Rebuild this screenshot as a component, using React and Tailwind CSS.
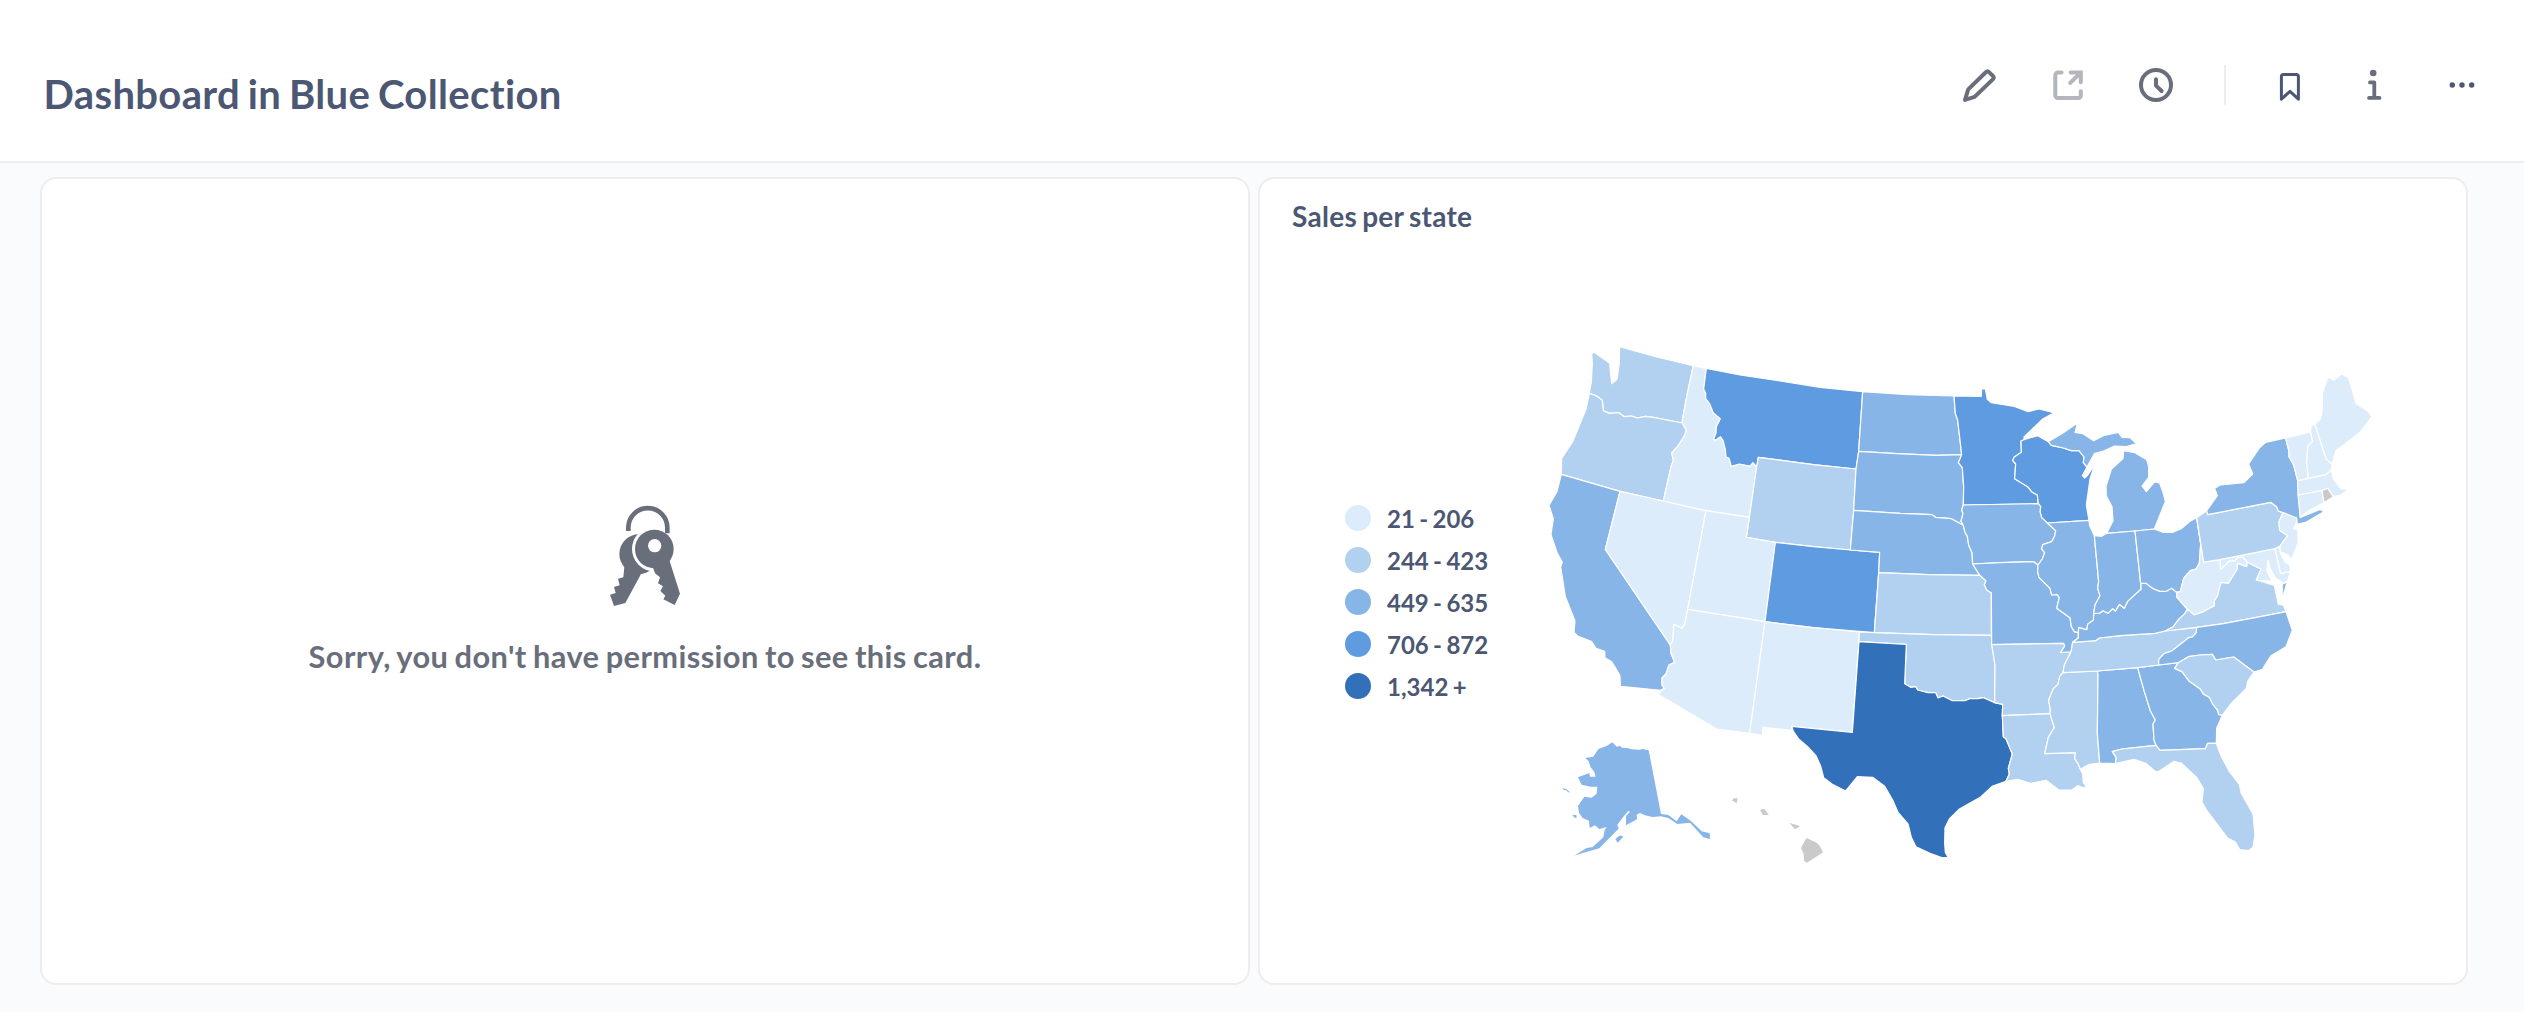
import React from "react";

const LEVELS = ["#DDECFB", "#B2D1F0", "#88B5E8", "#5F9BE0", "#3370BA"];
const NO_DATA = "#CACACA";

const LEGEND = ["21 - 206", "244 - 423", "449 - 635", "706 - 872", "1,342 +"];

const STATES = [
  { id: "WA", level: 1, points: "162,66 209,100 215,161 231,148 238,98 239,50 350,81 460,107 442,190 427,270 427,279 340,262 317,259 292,264 274,258 253,260 236,248 208,250 190,242 187,211 168,197 148,190 154,155 157,100 155,72" },
  { id: "OR", level: 1, points: "148,190 168,197 187,211 190,242 208,250 236,248 253,260 274,258 292,264 317,259 340,262 427,279 439,301 434,316 415,347 395,369 400,391 393,410 370,513 240,484 64,433 65,385 98,335 138,238" },
  { id: "CA", level: 2, points: "64,433 240,484 196,658 391,945 393,970 404,997 387,1005 378,1032 366,1044 366,1065 373,1075 362,1081 241,1069 240,1037 215,995 195,983 194,964 168,955 155,935 113,918 102,907 105,872 76,800 62,710 67,697 52,670 33,614 40,566 27,526 51,484" },
  { id: "NV", level: 0, points: "240,484 370,513 498,542 443,838 434,883 426,895 402,883 398,933 391,945 196,658" },
  { id: "ID", level: 0, points: "460,107 499,115 491,177 497,190 497,206 509,221 520,249 541,266 529,290 528,310 521,326 526,331 541,320 549,331 556,358 558,381 567,384 574,409 598,402 630,408 639,398 650,411 628,562 498,542 370,513 393,410 400,391 395,369 415,347 434,316 439,301 427,279 427,270 442,190" },
  { id: "MT", level: 3, points: "499,115 600,135 720,153 840,172 968,185 956,364 948,417 820,404 655,382 650,411 639,398 630,408 598,402 574,409 567,384 558,381 556,358 549,331 541,320 526,331 521,326 528,310 529,290 541,266 520,249 509,221 497,206 497,190 491,177" },
  { id: "WY", level: 1, points: "655,382 820,404 948,417 941,541 931,660 820,650 706,637 619,622 628,562 650,411" },
  { id: "UT", level: 0, points: "498,542 628,562 619,622 706,637 675,875 443,838" },
  { id: "CO", level: 3, points: "706,637 820,650 931,660 1019,667 1016,728 1003,908 820,893 675,875" },
  { id: "AZ", level: 0, points: "443,838 675,875 629,1210 530,1197 354,1093 373,1075 366,1065 366,1044 378,1032 387,1005 404,997 393,970 391,945 398,933 402,883 426,895 434,883" },
  { id: "NM", level: 0, points: "675,875 820,893 958,906 957,935 937,1207 755,1189 757,1201 669,1192 667,1216 629,1210" },
  { id: "ND", level: 2, points: "968,185 1105,194 1242,198 1246,250 1253,270 1265,374 1188,376 1070,371 956,364" },
  { id: "SD", level: 2, points: "956,364 1070,371 1188,376 1265,374 1255,398 1267,413 1271,470 1270,525 1265,540 1269,550 1263,574 1270,586 1234,566 1187,562 1176,554 1080,550 941,541 948,417" },
  { id: "NE", level: 2, points: "941,541 1080,550 1176,554 1187,562 1234,566 1270,586 1275,607 1282,619 1286,645 1296,668 1298,702 1319,736 1165,734 1016,728 1019,667 931,660" },
  { id: "KS", level: 1, points: "1016,728 1165,734 1319,736 1338,752 1333,764 1341,781 1354,788 1354,916 1180,914 1003,908" },
  { id: "OK", level: 1, points: "958,906 1003,908 1180,914 1354,916 1356,945 1365,1005 1364,1118 1330,1103 1314,1106 1290,1106 1275,1112 1237,1112 1209,1098 1194,1104 1187,1088 1164,1088 1133,1080 1127,1070 1112,1072 1094,1061 1099,943 957,935" },
  { id: "TX", level: 4, points: "957,935 1099,943 1094,1061 1112,1072 1127,1070 1133,1080 1164,1088 1187,1088 1194,1104 1209,1098 1237,1112 1275,1112 1290,1106 1314,1106 1330,1103 1364,1118 1388,1123 1387,1157 1390,1220 1398,1226 1417,1272 1405,1315 1408,1332 1398,1354 1358,1368 1322,1401 1257,1438 1228,1467 1215,1493 1214,1540 1216,1567 1225,1583 1205,1583 1170,1570 1128,1550 1114,1522 1104,1482 1074,1447 1058,1410 1034,1369 998,1342 952,1340 917,1383 877,1363 851,1343 842,1308 828,1277 803,1250 776,1227 760,1203 755,1189 937,1207" },
  { id: "MN", level: 3, points: "1242,198 1324,199 1325,177 1336,177 1342,208 1354,218 1423,229 1465,245 1497,237 1542,248 1507,268 1452,321 1452,330 1443,333 1444,367 1423,381 1418,391 1427,402 1424,446 1463,470 1476,486 1492,495 1495,521 1270,525 1271,470 1267,413 1255,398 1265,374 1253,270 1246,250" },
  { id: "WI", level: 3, points: "1443,333 1454,328 1493,317 1525,335 1534,346 1570,354 1594,362 1617,362 1632,381 1630,398 1641,411 1627,437 1634,444 1642,437 1664,405 1650,447 1639,525 1647,571 1522,579 1505,563 1500,545 1502,530 1495,521 1492,495 1476,486 1463,470 1424,446 1427,402 1418,391 1423,381 1444,367" },
  { id: "MI-upper", level: 2, points: "1525,335 1570,308 1613,278 1605,307 1629,311 1661,332 1693,316 1735,307 1746,322 1770,323 1789,341 1760,350 1724,348 1690,363 1663,371 1641,411 1630,398 1632,381 1617,362 1594,362 1570,354 1534,346" },
  { id: "MI-lower", level: 2, points: "1751,362 1785,368 1820,389 1826,410 1826,442 1806,468 1819,485 1843,456 1859,459 1871,493 1876,515 1843,597 1785,603 1700,610 1719,572 1716,530 1699,498 1698,470 1714,418 1749,386" },
  { id: "IA", level: 2, points: "1270,525 1495,521 1502,530 1500,545 1505,563 1522,579 1547,602 1544,618 1535,635 1508,644 1505,657 1514,668 1507,687 1494,705 1481,695 1380,698 1298,702 1296,668 1286,645 1282,619 1275,607 1270,586 1263,574 1269,550 1265,540" },
  { id: "MO", level: 2, points: "1298,702 1380,698 1481,695 1494,705 1493,725 1497,742 1530,775 1535,795 1551,793 1558,803 1550,835 1590,863 1594,890 1603,905 1615,908 1615,924 1598,937 1593,966 1561,968 1574,948 1570,940 1355,944 1354,788 1341,781 1333,764 1338,752 1319,736" },
  { id: "AR", level: 1, points: "1355,944 1570,940 1574,948 1561,968 1593,966 1573,1005 1569,1028 1559,1039 1554,1063 1540,1076 1526,1110 1531,1140 1530,1151 1480,1153 1387,1157 1388,1123 1364,1118 1365,1005" },
  { id: "LA", level: 1, points: "1387,1157 1480,1153 1530,1151 1543,1193 1525,1222 1514,1271 1606,1268 1604,1286 1615,1302 1621,1318 1628,1332 1630,1358 1639,1368 1633,1374 1613,1367 1596,1380 1557,1380 1518,1351 1472,1360 1433,1348 1398,1354 1408,1332 1405,1315 1417,1272 1398,1226 1390,1220" },
  { id: "MS", level: 1, points: "1569,1028 1672,1023 1674,1033 1672,1210 1679,1299 1645,1304 1621,1318 1615,1302 1604,1286 1606,1268 1514,1271 1525,1222 1543,1193 1530,1151 1531,1140 1526,1110 1540,1076 1554,1063 1559,1039" },
  { id: "AL", level: 2, points: "1672,1023 1793,1013 1813,1085 1831,1142 1846,1170 1839,1182 1842,1230 1848,1246 1745,1257 1717,1265 1729,1283 1726,1301 1679,1299 1672,1210 1674,1033" },
  { id: "GA", level: 2, points: "1793,1013 1856,1005 1915,998 1904,1015 1926,1025 1948,1054 1982,1078 1990,1092 2008,1102 2018,1122 2033,1141 2036,1153 2047,1156 2030,1195 2029,1240 2003,1240 1996,1256 1860,1261 1848,1246 1842,1230 1839,1182 1846,1170 1831,1142 1813,1085" },
  { id: "FL", level: 1, points: "1848,1246 1860,1261 1996,1256 2003,1240 2029,1240 2043,1278 2069,1326 2098,1363 2104,1390 2139,1452 2145,1515 2139,1552 2126,1562 2099,1559 2086,1536 2063,1524 2000,1441 1986,1417 1990,1376 1970,1342 1925,1300 1902,1294 1855,1325 1847,1325 1817,1300 1782,1288 1726,1301 1729,1283 1717,1265 1745,1257" },
  { id: "TN", level: 1, points: "1598,937 1667,932 1678,924 1740,917 1845,910 1875,903 1970,892 1969,908 1957,921 1946,923 1895,963 1872,971 1856,989 1856,1005 1793,1013 1672,1023 1569,1028 1573,1005 1593,966" },
  { id: "KY", level: 2, points: "1615,908 1616,892 1640,899 1643,882 1660,870 1661,851 1680,849 1689,842 1704,850 1718,836 1726,843 1738,823 1753,835 1762,815 1803,777 1802,760 1818,760 1840,776 1860,784 1880,783 1895,775 1910,787 1911,802 1942,838 1935,850 1916,868 1900,890 1875,903 1845,910 1740,917 1678,924 1667,932 1598,937 1615,924" },
  { id: "IL", level: 2, points: "1522,579 1647,571 1649,587 1663,617 1676,755 1673,775 1680,797 1665,825 1661,851 1660,870 1643,882 1640,899 1616,892 1615,908 1603,905 1594,890 1590,863 1550,835 1558,803 1551,793 1535,795 1530,775 1497,742 1493,725 1494,705 1507,687 1514,668 1505,657 1508,644 1535,635 1544,618 1547,602" },
  { id: "IN", level: 2, points: "1663,617 1685,619 1700,610 1785,603 1802,760 1803,777 1762,815 1753,835 1738,823 1726,843 1718,836 1704,850 1689,842 1680,849 1661,851 1665,825 1680,797 1673,775 1676,755" },
  { id: "OH", level: 2, points: "1785,603 1843,597 1870,607 1897,607 1925,595 1950,574 1970,563 1982,642 1978,700 1968,717 1951,722 1931,745 1921,785 1910,787 1895,775 1880,783 1860,784 1840,776 1818,760 1802,760" },
  { id: "WV", level: 0, points: "1970,563 1991,696 2040,689 2042,718 2068,693 2085,692 2093,682 2110,682 2122,697 2120,710 2092,700 2092,717 2065,760 2043,757 2033,797 2023,813 2023,827 1990,845 1963,855 1942,838 1911,802 1910,787 1921,785 1931,745 1951,722 1968,717 1978,700 1982,642" },
  { id: "VA", level: 1, points: "1875,903 1970,892 2050,881 2150,862 2238,845 2230,825 2215,823 2203,766 2149,750 2163,717 2122,697 2120,710 2092,700 2092,717 2065,760 2043,757 2033,797 2023,813 2023,827 1990,845 1963,855 1942,838 1935,850 1916,868 1900,890" },
  { id: "MD", level: 0, points: "2040,689 2205,656 2222,730 2252,724 2243,752 2231,760 2205,743 2190,715 2184,690 2181,722 2196,754 2149,750 2163,717 2122,697 2110,682 2093,682 2085,692 2068,693 2042,718" },
  { id: "VA-shore", level: 2, points: "2227,763 2242,755 2226,808" },
  { id: "NC", level: 2, points: "1970,892 2050,881 2150,862 2238,845 2257,901 2238,950 2193,977 2167,1018 2142,1026 2081,981 2027,990 2017,973 1980,975 1945,980 1915,998 1856,1005 1856,989 1872,971 1895,963 1946,923 1957,921 1969,908" },
  { id: "SC", level: 1, points: "1915,998 1945,980 1980,975 2017,973 2027,990 2081,981 2142,1026 2123,1054 2119,1075 2072,1122 2047,1156 2036,1153 2033,1141 2018,1122 2008,1102 1990,1092 1982,1078 1948,1054 1926,1025 1904,1015" },
  { id: "PA", level: 1, points: "1970,563 2000,542 2003,554 2192,517 2210,530 2215,543 2229,548 2217,575 2219,601 2243,617 2220,648 2205,656 2040,689 1991,696" },
  { id: "NY", level: 2, points: "2000,542 2032,497 2024,475 2041,465 2112,458 2138,432 2126,402 2157,355 2177,337 2237,324 2247,365 2247,380 2261,405 2273,452 2281,562 2340,538 2352,545 2299,576 2272,583 2270,565 2229,548 2215,543 2210,530 2192,517 2003,554" },
  { id: "NJ", level: 0, points: "2229,548 2270,564 2269,580 2260,597 2274,598 2274,640 2254,690 2245,676 2220,665 2220,648 2243,617 2219,601 2217,575" },
  { id: "DE", level: 0, points: "2205,656 2218,650 2221,668 2234,695 2250,706 2252,724 2222,730" },
  { id: "CT", level: 0, points: "2274,495 2346,481 2352,518 2310,539 2281,562" },
  { id: "MA", level: 0, points: "2273,452 2305,445 2357,434 2374,420 2380,448 2404,477 2427,478 2402,495 2380,500 2363,475 2346,481 2274,495" },
  { id: "RI", level: null, points: "2346,481 2363,475 2380,500 2352,518" },
  { id: "VT", level: 0, points: "2237,324 2312,306 2318,335 2303,348 2300,400 2305,445 2273,452 2261,405 2247,380 2247,365" },
  { id: "NH", level: 0, points: "2312,306 2313,288 2325,283 2358,386 2376,403 2374,420 2357,434 2305,445 2300,400 2303,348 2318,335" },
  { id: "ME", level: 0, points: "2325,283 2341,268 2347,240 2347,190 2364,141 2381,151 2405,132 2426,144 2448,220 2485,245 2496,260 2460,307 2388,362 2376,403 2358,386" },
];

const ALASKA = [
  "217,157 230,170 240,168 246,173 262,174 275,178 298,179 308,177 326,181 363,372 385,375 410,394 424,373 452,392 485,424 509,430 510,447 490,442 450,398 412,402 385,384 362,379 338,381 315,376 300,369 290,374 291,388 258,406 258,378 270,366 265,362 250,380 232,404 236,416 205,447 178,475 160,480 130,488 103,497 140,474 158,471 190,442 194,420 200,411 178,417 165,406 149,414 147,392 128,384 117,368 114,348 133,320 155,323 170,311 172,290 152,290 125,284 114,262 148,249 150,260 167,260 163,246 152,232 146,214 136,204 160,200 175,177 200,168",
  "226,447 240,436 250,440 233,458",
  "97,375 109,375 110,383 104,383",
  "69,294 80,298 91,308 84,306 78,300 70,299",
];

const HAWAII = [
  "576,331 582,325 593,325 590,340",
  "660,360 672,356 687,375 669,375",
  "748,398 780,409 765,418",
  "799,444 830,458 839,467 849,487 801,518 792,512 791,492 783,474",
];

function UsMap() {
  return (
    <svg viewBox="0 0 2520 1620" className="h-[540px] w-[840px] shrink-0">
      <g stroke="#ffffff" strokeWidth="3.6" strokeLinejoin="round">
        {STATES.map((s) => (
          <polygon key={s.id} points={s.points} fill={s.level === null ? NO_DATA : LEVELS[s.level]} />
        ))}
      </g>
      <g transform="translate(0 1080)">
        {ALASKA.map((p) => (
          <polygon key={p} points={p} fill={LEVELS[2]} />
        ))}
        {HAWAII.map((p) => (
          <polygon key={p} points={p} fill={NO_DATA} />
        ))}
      </g>
    </svg>
  );
}

function Icon({ className, children }) {
  return (
    <svg
      viewBox="0 0 40 40"
      fill="none"
      stroke="currentColor"
      strokeLinecap="round"
      strokeLinejoin="round"
      className={`size-10 shrink-0 ${className}`}
    >
      {children}
    </svg>
  );
}

function Toolbar() {
  return (
    <div className="flex items-center text-[#696E7B]">
      <Icon className="mr-12">
        <path strokeWidth="4" d="M25.8 7.3Q27.6 5.6 29.3 7.3L32.8 10.9Q34.5 12.6 32.8 14.3L14.6 31.9L5 34.9L8.2 24.4Z" />
      </Icon>
      <Icon className="mr-12 text-[#B4B6BD]">
        <path strokeWidth="4" d="M13.6 7.6H9.9a2.6 2.6 0 0 0-2.6 2.6v20.2a2.6 2.6 0 0 0 2.6 2.6h20.3a2.6 2.6 0 0 0 2.6-2.6V26.3" />
        <path strokeWidth="4" strokeLinejoin="miter" d="M22.6 7.6H32.8V17.3M32.3 8L22.2 17.9" />
      </Icon>
      <Icon className="mr-12">
        <circle cx="20" cy="20" r="15" strokeWidth="4" />
        <path strokeWidth="4" d="M20 14.2V20.6L25.6 26" />
      </Icon>
      <div className="mr-11 h-10 w-0.5 bg-[#EEECEC]" />
      <Icon className="mr-11 text-[#4C5773]">
        <path strokeWidth="3" d="M11.4 34.2V11.6Q11.4 9.4 13.6 9.4H26.2Q28.4 9.4 28.4 11.6V34.2L20 26.3Z" />
      </Icon>
      <Icon className="mr-12">
        <circle cx="19.2" cy="8" r="3.3" fill="currentColor" stroke="none" />
        <path strokeWidth="3.8" d="M16 17.4H20.3V32.8M15 32.9H25.5" />
      </Icon>
      <Icon className="text-[#4C5773]">
        <g fill="currentColor" stroke="none">
          <circle cx="10.3" cy="20" r="2.7" />
          <circle cx="20" cy="20" r="2.7" />
          <circle cx="29.7" cy="20" r="2.7" />
        </g>
      </Icon>
    </div>
  );
}

function KeysIcon() {
  return (
    <svg viewBox="0 0 330 390" className="h-[130px] w-[110px]" fill="#696E7B">
      <circle cx="147" cy="192" r="59" />
      <path d="M103 230L100 262L84 266L89 286L72 291L77 309L60 314L72 348L106 339L153 252Q168 249 180 242Z" />
      <circle cx="193" cy="177" r="67" fill="#ffffff" />
      <path d="M115 123V113A58.5 58.5 0 0 1 232 113V130" fill="none" stroke="#696E7B" strokeWidth="14" />
      <path d="M188 230L195 250L210 262L204 280L219 289L211 303L226 317L220 328L254 345L270 311L238 210Z" />
      <circle cx="193" cy="177" r="58" />
      <circle cx="194" cy="167" r="20" fill="#ffffff" />
    </svg>
  );
}

export default function App() {
  return (
    <div className="flex h-[1012px] w-[2524px] flex-col overflow-hidden bg-[#F9FBFD] font-['Lato',sans-serif] text-[#4C5773] [font-variant-ligatures:none]">
      <header className="flex h-[163px] shrink-0 justify-between border-b-2 border-[#EEECEC] bg-white pr-[42px] pl-[43.5px]">
        <h1 className="pt-[70px] text-[40px] leading-[48px] font-bold tracking-[0.36px] whitespace-nowrap [word-spacing:-2.4px]">
          Dashboard in Blue Collection
        </h1>
        <div className="pt-[65px]">
          <Toolbar />
        </div>
      </header>

      <main className="flex gap-2 pt-3.5 pl-10">
        <section className="flex h-[808px] w-[1210px] shrink-0 flex-col items-center rounded-2xl border-2 border-[#EEECEC] bg-white pt-[311px]">
          <KeysIcon />
          <p className="mt-[17px] text-[30.8px] leading-[40px] font-bold tracking-[0.4px] whitespace-nowrap text-[#696E7B] [word-spacing:-1.6px]">
            Sorry, you don't have permission to see this card.
          </p>
        </section>

        <section className="flex h-[808px] w-[1210px] shrink-0 flex-col rounded-2xl border-2 border-[#EEECEC] bg-white">
          <h2 className="pt-5 pl-8 text-[28px] leading-[34px] font-bold tracking-[0.28px] whitespace-nowrap [word-spacing:-1.9px]">
            Sales per state
          </h2>
          <div className="flex pt-[97px]">
            <ul className="ml-[85px] flex w-[195px] shrink-0 flex-col pt-[167px]">
              {LEGEND.map((label, i) => (
                <li key={label} className="flex h-[42px] items-center gap-4">
                  <span className="size-[26px] rounded-full" style={{ backgroundColor: LEVELS[i] }} />
                  <span className="pt-0.5 text-2xl leading-[30px] font-bold whitespace-nowrap [word-spacing:-1.5px]">{label}</span>
                </li>
              ))}
            </ul>
            <UsMap />
          </div>
        </section>
      </main>
    </div>
  );
}
